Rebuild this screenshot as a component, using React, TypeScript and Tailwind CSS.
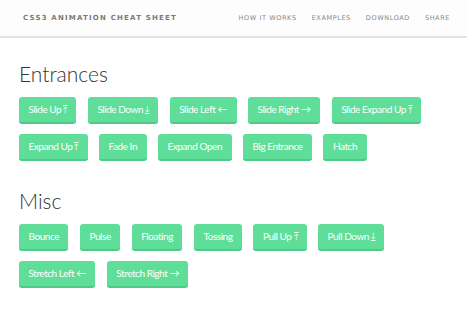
import React from "react";

const entrances = [
  "Slide Up ⤒",
  "Slide Down ⤓",
  "Slide Left ←",
  "Slide Right →",
  "Slide Expand Up ⤒",
  "Expand Up ⤒",
  "Fade In",
  "Expand Open",
  "Big Entrance",
  "Hatch",
];
const misc = [
  "Bounce",
  "Pulse",
  "Floating",
  "Tossing",
  "Pull Up ⤒",
  "Pull Down ⤓",
  "Stretch Left ←",
  "Stretch Right →",
];

function Btn({ label }: { label: string }) {
  return (
    <div className="h-[27px] px-[9.5px] flex items-center rounded-[3px] bg-[#5fde99] border-b-2 border-[#50c886] text-white text-[10px] font-[Lato,sans-serif] tracking-[-0.45px]">
      {label}
    </div>
  );
}

function Section({ title, items }: { title: string; items: string[] }) {
  return (
    <div>
      <h2 className="text-[21px] font-light text-[#333] leading-none font-[Lato,sans-serif] h-[24px] flex items-end">
        {title}
      </h2>
      <div className="mt-[13px] flex flex-wrap gap-x-[11.5px] gap-y-[10px] w-[420px]">
        {items.map((l) => (
          <Btn key={l} label={l} />
        ))}
      </div>
    </div>
  );
}

export default function App() {
  return (
    <div className="w-[467px] h-[320px] bg-white overflow-hidden">
      <header className="h-[38px] bg-[#fdfdfd] border-b-2 border-[#e4e4e4] flex items-center justify-between pl-[23px] pr-[17px] font-['DejaVu_Sans',sans-serif] text-[#777]">
        <div className="text-[7px] font-bold tracking-[1.2px] text-[#7a7a7a] pt-[1px]">CSS3 ANIMATION CHEAT SHEET</div>
        <nav className="flex gap-[15px] text-[6.5px] tracking-[0.6px] text-[#888] pt-[1px]">
          <span>HOW IT WORKS</span>
          <span>EXAMPLES</span>
          <span>DOWNLOAD</span>
          <span>SHARE</span>
        </nav>
      </header>
      <main className="pl-[19px] pt-[22px] flex flex-col gap-[26px]">
        <Section title="Entrances" items={entrances} />
        <Section title="Misc" items={misc} />
      </main>
    </div>
  );
}
